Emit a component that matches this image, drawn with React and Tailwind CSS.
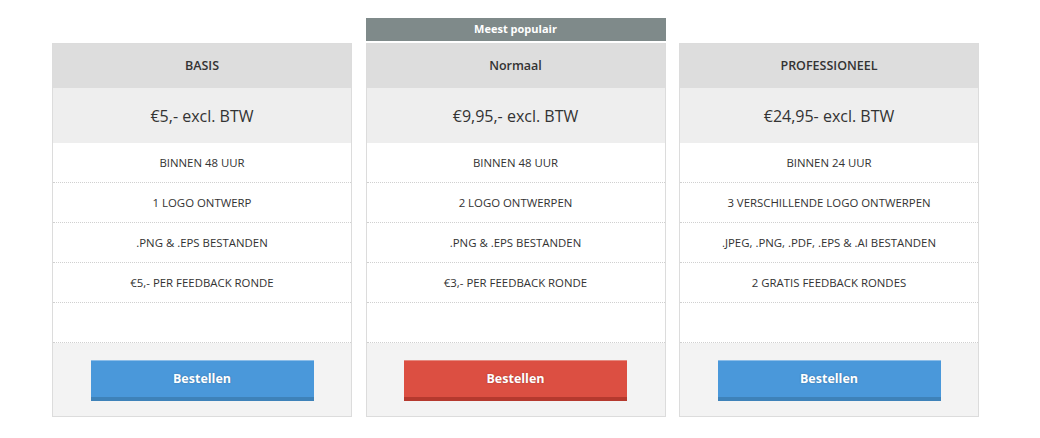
import React from 'react'

const plans = [
    {
        name: 'BASIS',
        price: '€5,- excl. BTW',
        features: ['BINNEN 48 UUR', '1 LOGO ONTWERP', '.PNG & .EPS BESTANDEN', '€5,- PER FEEDBACK RONDE', ''],
    },
    {
        name: 'Normaal',
        price: '€9,95,- excl. BTW',
        features: ['BINNEN 48 UUR', '2 LOGO ONTWERPEN', '.PNG & .EPS BESTANDEN', '€3,- PER FEEDBACK RONDE', ''],
        popular: true,
    },
    {
        name: 'PROFESSIONEEL',
        price: '€24,95- excl. BTW',
        features: ['BINNEN 24 UUR', '3 VERSCHILLENDE LOGO ONTWERPEN', '.JPEG, .PNG, .PDF, .EPS & .AI BESTANDEN', '2 GRATIS FEEDBACK RONDES', ''],
    },
]

const App = () => {
    return (
        <div className="w-[1040px] h-[438px] bg-white font-['Open_Sans',sans-serif] text-[#333]">
            <div className="grid grid-cols-[300px_300px_300px] gap-x-[13.5px] pl-[52px] pt-[18px]">
                {plans.map((plan) => (
                    <div key={plan.name} className="flex flex-col">

                        {/* Badge */}
                        {plan.popular ? (
                            <div className="h-[23px] bg-[#7f8a8a] text-white text-[11px] font-bold flex items-center justify-center mb-[2px]">
                                Meest populair
                            </div>
                        ) : (
                            <div className="h-[25px]"></div>
                        )}

                        {/* Card */}
                        <div className="border border-[#dcdcdc]">
                            <div className="h-[44px] bg-[#dddddd] flex items-center justify-center text-[12.5px] font-semibold text-[#333]">
                                {plan.name}
                            </div>
                            <div className="h-[55px] bg-[#eeeeee] flex items-center justify-center text-[16px] text-[#333]">
                                {plan.price}
                            </div>
                            {plan.features.map((f, i) => (
                                <div key={i} className="h-[40px] border-b border-dotted border-[#d0d0d0] flex items-center justify-center text-[11.4px] text-[#333]">
                                    {f}
                                </div>
                            ))}
                            <div className="h-[73px] bg-[#f3f3f3] flex items-center justify-center pt-[2px]">
                                {plan.popular ? (
                                    <button className="w-[223px] h-[41px] bg-[#dc4f42] border-t border-t-[#e58a80] border-b-4 border-b-[#b5392e] text-white text-[12.5px] font-bold [text-shadow:0_0_2px_rgba(0,0,0,0.25)]">
                                        Bestellen
                                    </button>
                                ) : (
                                    <button className="w-[223px] h-[41px] bg-[#4a98da] border-t border-t-[#8cbde8] border-b-4 border-b-[#3e82b9] text-white text-[12.5px] font-bold [text-shadow:0_0_2px_rgba(0,0,0,0.25)]">
                                        Bestellen
                                    </button>
                                )}
                            </div>
                        </div>

                    </div>
                ))}
            </div>
        </div>
    )
}

export default App
